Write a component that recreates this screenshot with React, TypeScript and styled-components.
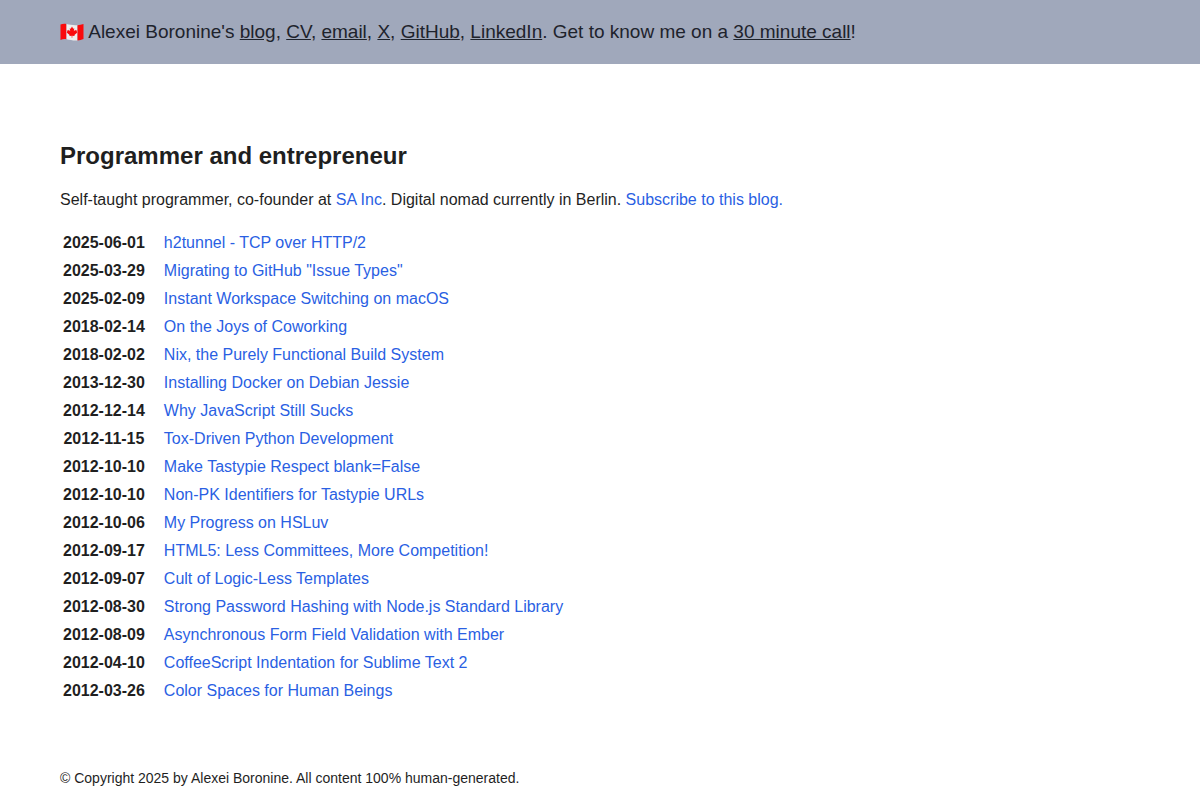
import React from "react";
import styled, { createGlobalStyle } from "styled-components";

const GlobalStyle = createGlobalStyle`
  body {
    margin: 0;
    background: #fff;
    color: #1f1f1f;
    font-family: "Liberation Sans", Arial, sans-serif;
    font-size: 16px;
    line-height: 24px;
  }
`;

const Header = styled.header`
  background: #a0a8bb;
  color: #1e232c;
  padding: 16px 60px;
  font-size: 19px;
  line-height: 32px;
`;

const HeaderLink = styled.a`
  color: inherit;
  text-decoration: underline;
`;

const Main = styled.main`
  padding: 76px 60px 0;
`;

const Title = styled.h1`
  margin: 0 0 16px;
  font-size: 24px;
  line-height: 32px;
`;

const Intro = styled.p`
  margin: 0 0 16px;
`;

const Link = styled.a`
  color: #2a5fe3;
  text-decoration: none;
`;

const Posts = styled.table`
  border-spacing: 2px;
`;

const PostDate = styled.th`
  padding: 1px;
  white-space: nowrap;
`;

const PostTitle = styled.td`
  padding: 1px 1px 1px 16px;
`;

const Footer = styled.footer`
  padding: 60px 60px 12px;
  font-size: 14px;
`;

const FlagIcon = styled.svg`
  width: 24px;
  height: 20px;
  vertical-align: -4px;
`;

const Flag = () => (
  <FlagIcon viewBox="0 0 24 20" role="img" aria-label="Canada">
    <path d="M.5 2.600C2.500 1.800 4.500 1.600 6.500 2.100V17.300C4.500 16.900 2.500 17.100.5 17.900Z" fill="#fa0a0c" />
    <path d="M6.500 2.100C10 2.700 13.500 3.700 17.500 3.200V18.500C13.500 18.900 10 17.800 6.500 17.300Z" fill="#eee" />
    <path d="M17.500 3.200C19.500 3 21.500 2.600 23.500 1.900V17.100C21.500 17.900 19.500 18.300 17.500 18.500Z" fill="#fa0a0c" />
    <path d="M12 4.500l1.200 2.200 1.100-.5-.5 3 1.500-1.500.4.900 1.500-.2-.5 1.700.7.500-3 2.500.2 1-2.300-.3v2h-.6v-2l-2.300.3.200-1-3-2.500.7-.5-.5-1.700 1.500.2.400-.9 1.500 1.500-.5-3 1.100.5Z" fill="#fa0a0c" />
  </FlagIcon>
);

const posts = [
  ["2025-06-01", "h2tunnel - TCP over HTTP/2"],
  ["2025-03-29", 'Migrating to GitHub "Issue Types"'],
  ["2025-02-09", "Instant Workspace Switching on macOS"],
  ["2018-02-14", "On the Joys of Coworking"],
  ["2018-02-02", "Nix, the Purely Functional Build System"],
  ["2013-12-30", "Installing Docker on Debian Jessie"],
  ["2012-12-14", "Why JavaScript Still Sucks"],
  ["2012-11-15", "Tox-Driven Python Development"],
  ["2012-10-10", "Make Tastypie Respect blank=False"],
  ["2012-10-10", "Non-PK Identifiers for Tastypie URLs"],
  ["2012-10-06", "My Progress on HSLuv"],
  ["2012-09-17", "HTML5: Less Committees, More Competition!"],
  ["2012-09-07", "Cult of Logic-Less Templates"],
  ["2012-08-30", "Strong Password Hashing with Node.js Standard Library"],
  ["2012-08-09", "Asynchronous Form Field Validation with Ember"],
  ["2012-04-10", "CoffeeScript Indentation for Sublime Text 2"],
  ["2012-03-26", "Color Spaces for Human Beings"],
];

export default function App() {
  return (
    <>
      <GlobalStyle />
      <Header>
        <Flag /> Alexei Boronine's <HeaderLink href="#blog">blog</HeaderLink>,{" "}
        <HeaderLink href="#cv">CV</HeaderLink>, <HeaderLink href="#email">email</HeaderLink>,{" "}
        <HeaderLink href="#x">X</HeaderLink>, <HeaderLink href="#github">GitHub</HeaderLink>,{" "}
        <HeaderLink href="#linkedin">LinkedIn</HeaderLink>. Get to know me on a{" "}
        <HeaderLink href="#call">30 minute call</HeaderLink>!
      </Header>
      <Main>
        <Title>Programmer and entrepreneur</Title>
        <Intro>
          Self-taught programmer, co-founder at <Link href="#sa">SA Inc</Link>. Digital nomad
          currently in Berlin. <Link href="#subscribe">Subscribe to this blog.</Link>
        </Intro>
        <Posts>
          <tbody>
            {posts.map(([date, title]) => (
              <tr key={title}>
                <PostDate scope="row">{date}</PostDate>
                <PostTitle>
                  <Link href="#post">{title}</Link>
                </PostTitle>
              </tr>
            ))}
          </tbody>
        </Posts>
      </Main>
      <Footer>© Copyright 2025 by Alexei Boronine. All content 100% human-generated.</Footer>
    </>
  );
}
